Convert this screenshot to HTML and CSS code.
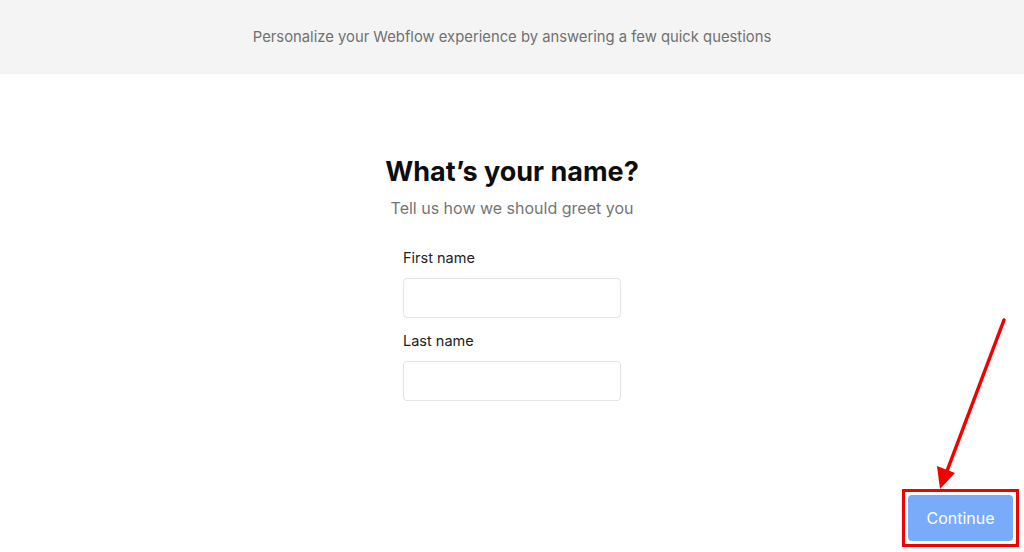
FILE: index.html
```html
<!DOCTYPE html>
<html lang="en">
<head>
<meta charset="UTF-8">
<meta name="viewport" content="width=device-width, initial-scale=1.0">
<title>Onboarding</title>
<link rel="stylesheet" href="styles.css">
</head>
<body>
<div class="top-bar">Personalize your Webflow experience by answering a few quick questions</div>

<div class="main">
  <h1 class="title">What’s your name?</h1>
  <p class="subtitle">Tell us how we should greet you</p>

  <form class="name-form" onsubmit="return false;">
    <label class="field-label" for="firstName">First name</label>
    <input type="text" id="firstName" class="field-input">

    <label class="field-label" for="lastName">Last name</label>
    <input type="text" id="lastName" class="field-input">
  </form>
</div>

<div class="footer">
  <div class="highlight">
    <button class="continue-button">Continue</button>
  </div>
</div>

<!-- red pointer to the button -->
<svg class="pointer" width="1024" height="552" viewBox="0 0 1024 552">
  <line x1="1004" y1="320" x2="947" y2="471" stroke="#f50000" stroke-width="3.5" stroke-linecap="round"/>
  <polygon points="940,489 937,466 955,473" fill="#f50000"/>
</svg>
</body>
</html>
```

FILE: styles.css
```css
html, body {
    margin: 0;
    padding: 0;
}

body {
    height: 100vh;
    display: flex;
    flex-direction: column;
    background-color: #ffffff;
    font-family: Inter, "Noto Sans", sans-serif;
    color: #1a1a1a;
    position: relative;
    overflow: hidden;
}

.top-bar {
    height: 74px;
    display: flex;
    justify-content: center;
    align-items: center;
    background-color: #f4f4f4;
    color: #707070;
    font-size: 14.8px;
}

.main {
    flex: 1;
    display: flex;
    flex-direction: column;
    align-items: center;
    padding-top: 82px;
}

.title {
    margin: 0;
    font-size: 27px;
    line-height: 32px;
    font-weight: 700;
    color: #0d0d0d;
}

.subtitle {
    margin: 8px 0 0 0;
    font-size: 16px;
    line-height: 24px;
    color: #757575;
}

/* stacked label + input pairs */
.name-form {
    width: 218px;
    margin-top: 28px;
    display: flex;
    flex-direction: column;
}

.field-label {
    font-size: 14.5px;
    line-height: 20px;
    color: #222222;
    margin-bottom: 10px;
}

.field-input {
    height: 40px;
    box-sizing: border-box;
    border: 1px solid #e4e4e4;
    border-radius: 4px;
    background: #ffffff;
    outline: none;
    margin-bottom: 13px;
}

.footer {
    display: flex;
    justify-content: flex-end;
    padding: 0 5px 5px 0;
}

.highlight {
    display: flex;
    padding: 3px;
    border: 3px solid #f50000;
}

.continue-button {
    width: 105px;
    height: 46px;
    border: none;
    border-radius: 4px;
    background-color: #78abfa;
    color: #ffffff;
    font-family: Inter, "Noto Sans", sans-serif;
    font-size: 16px;
}

.pointer {
    position: absolute;
    left: 0;
    top: 0;
    pointer-events: none;
}
```
